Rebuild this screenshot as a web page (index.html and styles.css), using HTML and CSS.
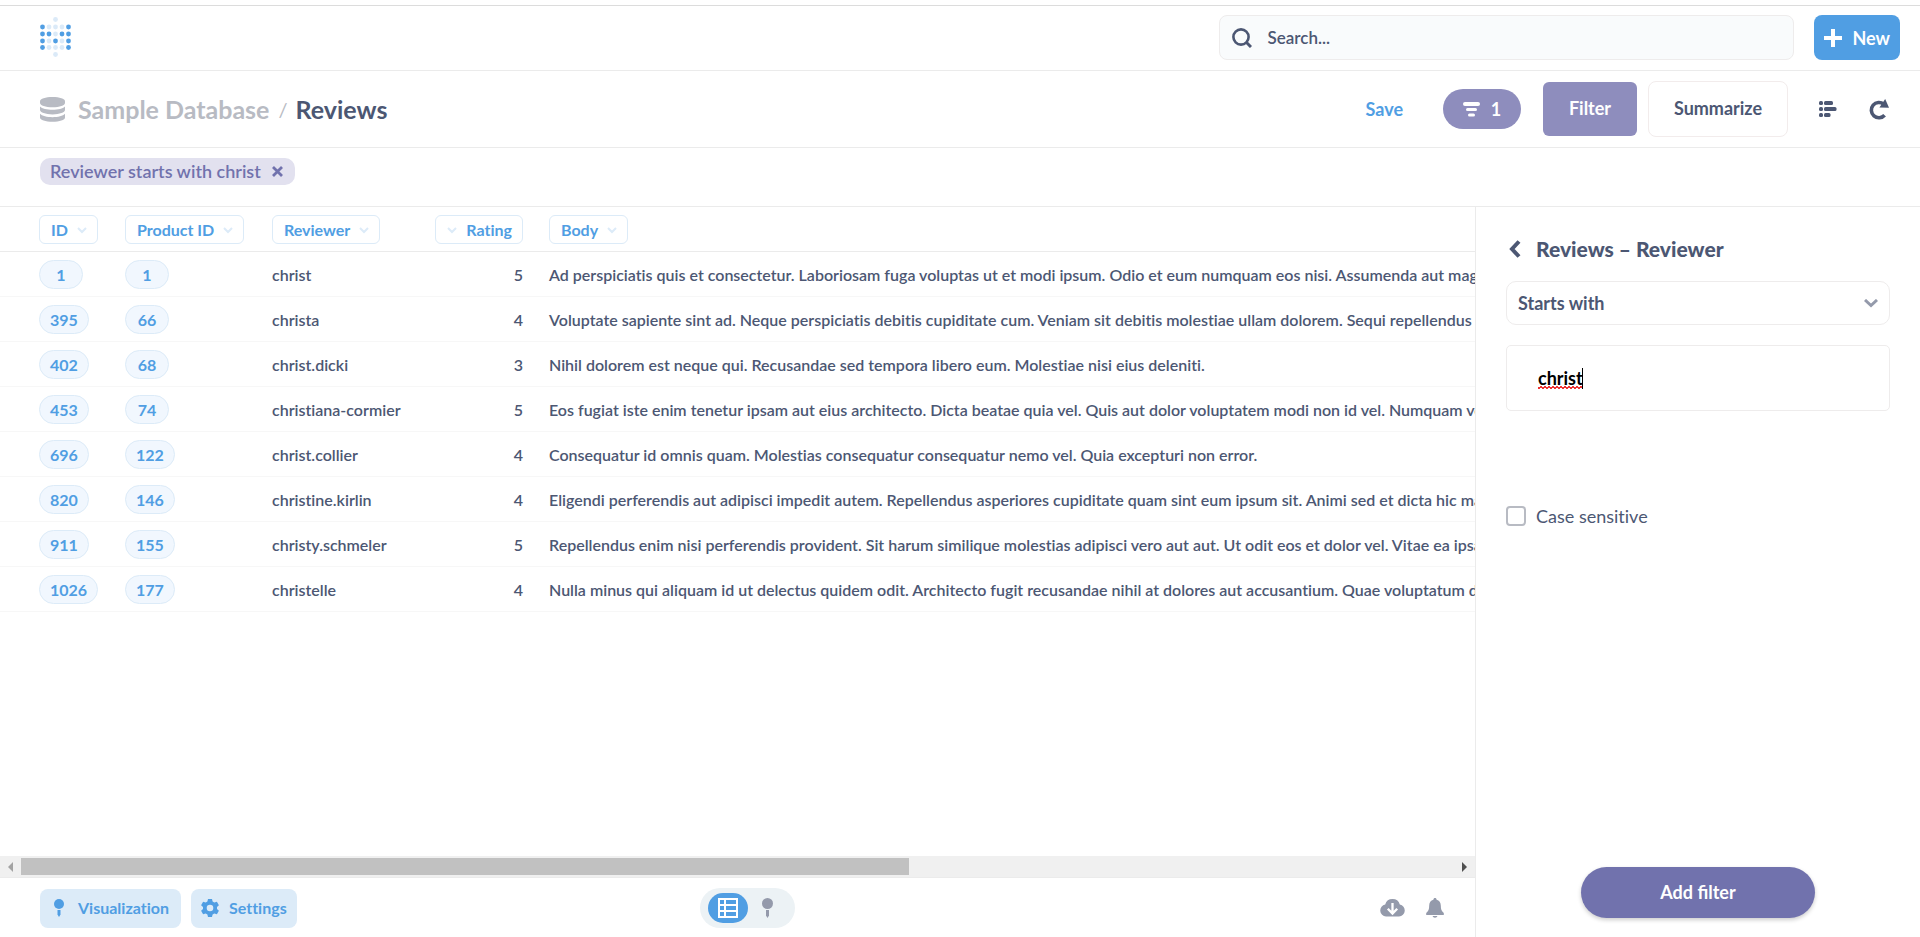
FILE: index.html
```html
<!DOCTYPE html>
<html lang="en">
<head>
<meta charset="utf-8">
<title>Reviews</title>
<link rel="stylesheet" href="styles.css">
</head>
<body>
<div class="app">
  <header class="topbar">
    <a class="logo" href="#" aria-label="Home">
      <svg width="32" height="41" viewBox="0 0 32 41" fill="#509ee3">
        <g fill="#dbeaf8">
          <circle cx="15.500" cy="2.500" r="2.400"/><circle cx="9" cy="10" r="2.400"/><circle cx="15.500" cy="10" r="2.400"/><circle cx="22" cy="10" r="2.400"/>
          <circle cx="15.500" cy="17" r="2.400"/><circle cx="9" cy="24" r="2.400"/><circle cx="22" cy="24" r="2.400"/>
          <circle cx="9" cy="30.500" r="2.400"/><circle cx="15.500" cy="30.500" r="2.400"/><circle cx="22" cy="30.500" r="2.400"/><circle cx="15.500" cy="37.500" r="2.400"/>
        </g>
        <circle cx="2.500" cy="10" r="2.400"/><circle cx="28.500" cy="10" r="2.400"/>
        <circle cx="2.500" cy="17" r="2.400"/><circle cx="9" cy="17" r="2.400"/><circle cx="22" cy="17" r="2.400"/><circle cx="28.500" cy="17" r="2.400"/>
        <circle cx="2.500" cy="24" r="2.400"/><circle cx="15.500" cy="24" r="2.400"/><circle cx="28.500" cy="24" r="2.400"/>
        <circle cx="2.500" cy="30.500" r="2.400"/><circle cx="28.500" cy="30.500" r="2.400"/>
      </svg>
    </a>
    <div class="topbar-actions">
      <label class="search">
        <svg width="20" height="20" viewBox="0 0 20 20" fill="none" stroke="#4c5773" stroke-width="2.600"><circle cx="9" cy="9" r="7.600"/><path d="M14.300 14.300L19 19" stroke-width="3"/></svg>
        <input type="text" placeholder="Search..." aria-label="Search">
      </label>
      <button class="new-btn" type="button">
        <svg width="18" height="18" viewBox="0 0 18 18" fill="#fff"><path d="M7 0h4v7h7v4h-7v7H7v-7H0V7h7z"/></svg>
        New
      </button>
    </div>
  </header>

  <div class="question-bar">
    <div class="crumbs">
      <svg width="25" height="25" viewBox="0 0 25 25" fill="#b8bbc3"><path d="M12.500 0C19.500 0 25 1.800 25 4.200v1.700c0 2.400-5.500 4.300-12.500 4.300S0 8.300 0 5.900V4.200C0 1.800 5.500 0 12.500 0z"/><path d="M0 9.400c2 2.200 7 3.300 12.500 3.300S23 11.600 25 9.400v3.700c0 2.400-5.500 4.300-12.500 4.300S0 15.500 0 13.100z"/><path d="M0 16.800c2 2.300 7 3.400 12.500 3.400S23 19.100 25 16.800v3.700c0 2.500-5.500 4.300-12.500 4.300S0 23 0 20.500z"/></svg>
      <a class="crumb-db" href="#">Sample Database</a>
      <span class="crumb-sep">/</span>
      <h1 class="crumb-table">Reviews</h1>
    </div>
    <div class="question-actions">
      <a class="save" href="#">Save</a>
      <button class="filter-count" type="button">
        <svg width="17" height="15" viewBox="0 0 17 15" fill="#fff"><rect width="17" height="4" rx="2"/><rect x="3" y="6" width="11" height="3" rx="1.500"/><rect x="5" y="11.500" width="7" height="3" rx="1.500"/></svg>
        1
      </button>
      <button class="filter-btn" type="button">Filter</button>
      <button class="summarize-btn" type="button">Summarize</button>
      <button class="icon-btn" type="button" aria-label="Show editor">
        <svg width="18" height="16" viewBox="0 0 18 16" fill="#4c5773"><rect width="4" height="4" rx="1.500"/><rect x="5" width="9" height="4" rx="1.500"/><rect y="6" width="4" height="4" rx="1.500"/><rect x="5" y="6" width="12.500" height="4" rx="1.500"/><rect y="12" width="4" height="4" rx="1.500"/><rect x="5" y="12" width="6.500" height="4" rx="1.500"/></svg>
      </button>
      <button class="icon-btn refresh-btn" type="button" aria-label="Refresh">
        <svg width="20" height="21" viewBox="0 0 20 21"><path d="M14.800 5.300A7.600 7.600 0 1 0 15.600 16.200" fill="none" stroke="#4c5773" stroke-width="3.600"/><path d="M16.200 0L20 8.700l-9.600-.3z" fill="#4c5773"/></svg>
      </button>
    </div>
  </div>

  <div class="filter-strip">
    <div class="filter-chip">
      Reviewer starts with christ
      <button type="button" aria-label="Remove filter"><svg width="11" height="11" viewBox="0 0 11 11" stroke="#7172ad" stroke-width="2.800"><path d="M1 1l9 9M10 1l-9 9"/></svg></button>
    </div>
  </div>

  <div class="workspace">
    <main class="results">
      <div class="table-wrap">
        <table class="grid">
          <colgroup><col class="col-id"><col class="col-product"><col class="col-reviewer"><col class="col-rating"><col class="col-body"></colgroup>
          <thead>
            <tr>
              <th><button class="col-head" type="button">ID <svg class="caret" viewBox="0 0 10 7"><path d="M1 1l4 4 4-4"/></svg></button></th>
              <th><button class="col-head" type="button">Product ID <svg class="caret" viewBox="0 0 10 7"><path d="M1 1l4 4 4-4"/></svg></button></th>
              <th><button class="col-head" type="button">Reviewer <svg class="caret" viewBox="0 0 10 7"><path d="M1 1l4 4 4-4"/></svg></button></th>
              <th class="num"><button class="col-head" type="button"><svg class="caret" viewBox="0 0 10 7"><path d="M1 1l4 4 4-4"/></svg> Rating</button></th>
              <th><button class="col-head" type="button">Body <svg class="caret" viewBox="0 0 10 7"><path d="M1 1l4 4 4-4"/></svg></button></th>
            </tr>
          </thead>
          <tbody>
            <tr><td><a class="pill" href="#">1</a></td><td><a class="pill" href="#">1</a></td><td class="txt">christ</td><td class="txt num">5</td><td class="txt">Ad perspiciatis quis et consectetur. Laboriosam fuga voluptas ut et modi ipsum. Odio et eum numquam eos nisi. Assumenda aut magnam</td></tr>
            <tr><td><a class="pill" href="#">395</a></td><td><a class="pill" href="#">66</a></td><td class="txt">christa</td><td class="txt num">4</td><td class="txt">Voluptate sapiente sint ad. Neque perspiciatis debitis cupiditate cum. Veniam sit debitis molestiae ullam dolorem. Sequi repellendus quia</td></tr>
            <tr><td><a class="pill" href="#">402</a></td><td><a class="pill" href="#">68</a></td><td class="txt">christ.dicki</td><td class="txt num">3</td><td class="txt">Nihil dolorem est neque qui. Recusandae sed tempora libero eum. Molestiae nisi eius deleniti.</td></tr>
            <tr><td><a class="pill" href="#">453</a></td><td><a class="pill" href="#">74</a></td><td class="txt">christiana-cormier</td><td class="txt num">5</td><td class="txt">Eos fugiat iste enim tenetur ipsam aut eius architecto. Dicta beatae quia vel. Quis aut dolor voluptatem modi non id vel. Numquam voluptas</td></tr>
            <tr><td><a class="pill" href="#">696</a></td><td><a class="pill" href="#">122</a></td><td class="txt">christ.collier</td><td class="txt num">4</td><td class="txt">Consequatur id omnis quam. Molestias consequatur consequatur nemo vel. Quia excepturi non error.</td></tr>
            <tr><td><a class="pill" href="#">820</a></td><td><a class="pill" href="#">146</a></td><td class="txt">christine.kirlin</td><td class="txt num">4</td><td class="txt">Eligendi perferendis aut adipisci impedit autem. Repellendus asperiores cupiditate quam sint eum ipsum sit. Animi sed et dicta hic maiores</td></tr>
            <tr><td><a class="pill" href="#">911</a></td><td><a class="pill" href="#">155</a></td><td class="txt">christy.schmeler</td><td class="txt num">5</td><td class="txt">Repellendus enim nisi perferendis provident. Sit harum similique molestias adipisci vero aut aut. Ut odit eos et dolor vel. Vitae ea ipsam</td></tr>
            <tr><td><a class="pill" href="#">1026</a></td><td><a class="pill" href="#">177</a></td><td class="txt">christelle</td><td class="txt num">4</td><td class="txt">Nulla minus qui aliquam id ut delectus quidem odit. Architecto fugit recusandae nihil at dolores aut accusantium. Quae voluptatum delectus</td></tr>
          </tbody>
        </table>
      </div>
      <div class="hscroll">
        <svg width="5" height="10" viewBox="0 0 5 10" fill="#a3a3a3"><path d="M5 0v10L0 5z"/></svg>
        <div class="hscroll-track"><div class="hscroll-thumb"></div></div>
        <svg width="5" height="10" viewBox="0 0 5 10" fill="#505050"><path d="M0 0v10l5-5z"/></svg>
      </div>
      <footer class="footer">
        <div class="footer-left">
          <button class="soft-btn viz-btn" type="button">
            <svg width="10" height="18" viewBox="0 0 10 18" fill="#509ee3"><circle cx="5" cy="5" r="5"/><path d="M3.500 11h3v4.500L5 18l-1.500-2.500z"/></svg>
            Visualization
          </button>
          <button class="soft-btn" type="button">
            <svg width="18" height="18" viewBox="0 0 18 18" fill="#509ee3" fill-rule="evenodd"><path d="M7 0h4l.6 2.600 1.700 1 2.600-.8 2 3.500-1.900 1.800v1.900l1.900 1.800-2 3.500-2.600-.8-1.700 1L11 18H7l-.6-2.500-1.700-1-2.600.8-2-3.500L2 10V8.100L.1 6.300l2-3.500 2.600.8 1.700-1zM9 5.700a3.300 3.300 0 1 0 0 6.600 3.300 3.300 0 0 0 0-6.600z"/></svg>
            Settings
          </button>
        </div>
        <div class="view-toggle">
          <button class="toggle-on" type="button" aria-label="Table view">
            <svg width="20" height="20" viewBox="0 0 20 20" fill="#fff" fill-rule="evenodd"><path d="M0 0h20v20H0zM2 2v4h4V2zM8 2v4h10V2zM2 8v4h4V8zM8 8v4h10V8zM2 14v4h4v-4zM8 14v4h10v-4z"/></svg>
          </button>
          <button class="toggle-off" type="button" aria-label="Visualization view">
            <svg width="11" height="20" viewBox="0 0 11 20" fill="#949aab"><circle cx="5.500" cy="5.500" r="5.500"/><path d="M4 12h3v5.500L5.500 20 4 17.500z"/></svg>
          </button>
        </div>
        <div class="footer-right">
          <button class="icon-btn" type="button" aria-label="Download">
            <svg width="25" height="18" viewBox="0 0 25 18"><path d="M6 17.500a6 6 0 0 1-.8-11.900A7.600 7.600 0 0 1 19.800 5.600 6 6 0 0 1 19 17.500z" fill="#949aab"/><path d="M12.500 4v10.500M7.800 9.700l4.700 4.900 4.700-4.900" fill="none" stroke="#fff" stroke-width="2.300"/></svg>
          </button>
          <button class="icon-btn" type="button" aria-label="Alerts">
            <svg width="18" height="20" viewBox="0 0 18 20" fill="#949aab"><path d="M9 0c.9 0 1.600.7 1.600 1.700 2.700.7 4.200 2.900 4.200 5.900 0 4 .7 5.700 3 7.400V17H.2v-2c2.300-1.700 3-3.400 3-7.400 0-3 1.500-5.200 4.200-5.900C7.400.7 8.100 0 9 0zM6.600 18h4.800c-.3 1-1.200 1.700-2.400 1.700S6.900 19 6.600 18z"/></svg>
          </button>
        </div>
      </footer>
    </main>

    <aside class="panel">
      <div class="panel-head">
        <button type="button" aria-label="Back"><svg width="12" height="18" viewBox="0 0 12 18" fill="none" stroke="#4c5773" stroke-width="4"><path d="M10 1.500L3 9l7 7.500"/></svg></button>
        <h2>Reviews – Reviewer</h2>
      </div>
      <div class="select-wrap">
        <select aria-label="Operator"><option>Starts with</option></select>
        <svg class="select-caret" width="14" height="9" viewBox="0 0 14 9" fill="none" stroke="#949aab" stroke-width="3"><path d="M1 1l6 5.500L13 1"/></svg>
      </div>
      <div class="value-wrap">
        <input class="value-input" type="text" value="christ" aria-label="Filter value" spellcheck="false">
        <span class="spell-mark"></span>
      </div>
      <label class="case-row"><input type="checkbox"> Case sensitive</label>
      <button class="add-btn" type="button">Add filter</button>
    </aside>
  </div>
</div>
</body>
</html>
```

FILE: styles.css
```css
* { box-sizing: border-box; }
body { margin: 0; background: #fff; color: #4c5773; font: 700 16px/20px Lato, "Liberation Sans", sans-serif; }
button, input, select { font: inherit; color: inherit; }
button { margin: 0; padding: 0; border: 0; background: none; cursor: pointer; }
a { color: inherit; text-decoration: none; }
svg { display: block; flex: none; }
h1, h2 { margin: 0; font-weight: 700; }

.app { display: flex; flex-direction: column; min-height: 100vh; padding-top: 5px; }

.topbar { display: flex; align-items: center; justify-content: space-between; height: 66px; padding: 0 20px 1px 40px; border-top: 1px solid #dcdcdc; border-bottom: 1px solid #ebebeb; }
.topbar-actions { display: flex; gap: 20px; width: 40%; min-width: 480px; justify-content: flex-end; }
.search { display: flex; flex: 1; align-items: center; gap: 15px; height: 45px; max-width: 575px; padding: 0 12px; border: 1px solid #eeecec; border-radius: 8px; background: #f9fbfc; }
.search input { flex: 1; min-width: 0; padding: 0; border: 0; outline: 0; background: none; font-size: 17px; font-weight: 600; }
.search input::placeholder { color: #4c5773; opacity: 1; }
.new-btn { display: flex; align-items: center; gap: 10px; height: 45px; padding: 0 10px; border-radius: 8px; background: #509ee3; color: #fff; font-size: 18px; }

.question-bar { display: flex; align-items: center; justify-content: space-between; padding: 10px 31px 10px 40px; border-bottom: 1px solid #ebebeb; }
.crumbs { display: flex; align-items: center; font-size: 25px; line-height: 30px; }
.crumb-db { margin-left: 13px; color: #b8bbc3; }
.crumb-sep { margin: 0 8px 0 9px; color: #b8bbc3; font-size: 20px; font-weight: 400; }
.crumb-table { font-size: 25px; line-height: 30px; }
.question-actions { display: flex; align-items: center; font-size: 18px; }
.save { margin-right: 40px; color: #509ee3; }
.filter-count { display: flex; align-items: center; justify-content: center; gap: 11px; width: 78px; height: 40px; margin-right: 22px; border-radius: 20px; background: #8e8dbd; color: #fff; }
.filter-btn { width: 94px; height: 54px; padding-bottom: 2px; margin-right: 11px; border-radius: 6px; background: #8e8dbd; color: #fff; }
.summarize-btn { width: 140px; height: 56px; padding-bottom: 2px; margin-right: 31px; border: 1px solid #f2ecec; border-radius: 8px; }
.refresh-btn { margin-left: 32px; }

.filter-strip { padding: 10px 40px 21px; border-bottom: 1px solid #ebebeb; }
.filter-chip { display: inline-flex; align-items: center; gap: 11px; height: 27px; padding: 0 12px 1px 10px; border-radius: 10px; background: #e2e1ef; color: #7172ad; font-size: 18px; font-weight: 600; vertical-align: top; font-variant-ligatures: none; }

.workspace { display: flex; flex: 1; }
.results { display: flex; flex: 1; flex-direction: column; min-width: 0; }
.table-wrap { flex: 1; overflow: hidden; }
.grid { width: 2380px; table-layout: fixed; border-collapse: separate; border-spacing: 0; white-space: nowrap; font-variant-ligatures: none; }
.col-id { width: 112px; }
.col-product { width: 147px; }
.col-reviewer { width: 161px; }
.col-rating { width: 116px; }
.grid th, .grid td { height: 45px; padding: 0 13px; text-align: left; border-bottom: 1px solid #f7f7f7; }
.grid th { border-bottom-color: #ebebeb; font-weight: 700; }
.grid th:first-child, .grid td:first-child { padding-left: 39px; padding-right: 0; }
.grid .txt { padding-top: 2px; font-weight: 600; }
.grid .num { text-align: right; }
.col-head { display: inline-flex; align-items: center; gap: 9px; height: 29px; padding: 2px 10px 0 11px; border: 1px solid #dcebf8; border-radius: 6px; color: #509ee3; vertical-align: middle; }
.caret { width: 10px; height: 7px; fill: none; stroke: #dcebf8; stroke-width: 2; }
.pill { display: inline-flex; align-items: center; justify-content: center; min-width: 44px; height: 29px; padding: 2px 10px 0; border: 1px solid #dcebf8; border-radius: 15px; background: #f1f7fe; color: #509ee3; vertical-align: middle; }

.hscroll { display: flex; align-items: center; gap: 8px; height: 22px; padding: 0 8px; border-bottom: 1px solid #ebebeb; background: #f0f0f0; }
.hscroll-track { flex: 1; }
.hscroll-thumb { width: 62%; height: 17px; background: #c1c1c1; }

.footer { display: grid; grid-template-columns: 1fr auto 1fr; align-items: center; height: 59px; padding: 1px 20px 0 40px; }
.footer-left { display: flex; gap: 10px; }
.soft-btn { display: flex; align-items: center; gap: 10px; height: 39px; padding: 0 10px; border-radius: 8px; background: #dcebf8; color: #509ee3; font-variant-ligatures: none; }
.viz-btn { gap: 14px; padding: 0 12px 0 14px; }
.view-toggle { display: flex; align-items: center; width: 95px; height: 40px; padding: 0 8px; border-radius: 20px; background: #ecf2f5; }
.toggle-on { display: flex; align-items: center; justify-content: center; width: 40px; height: 30px; border-radius: 15px; background: #509ee3; }
.toggle-off { padding: 0 14px; }
.footer-right { display: flex; align-items: center; justify-content: flex-end; gap: 21px; padding-right: 11px; }

.panel { display: flex; flex-direction: column; width: 445px; padding: 30px 30px 19px; border-left: 1px solid #ebebeb; }
.panel-head { display: flex; align-items: center; gap: 15px; height: 24px; padding-left: 3px; margin-bottom: 20px; }
.panel-head h2 { font-size: 21px; font-weight: 900; line-height: 24px; }
.select-wrap { position: relative; height: 44px; margin-bottom: 20px; font-size: 18px; }
.select-wrap select { width: 100%; height: 44px; padding: 0 11px; border: 1px solid #eeecec; border-radius: 10px; background: #fff; appearance: none; }
.select-caret { position: absolute; right: 12px; top: 18px; pointer-events: none; }
.value-wrap { position: relative; margin-bottom: 95px; font-size: 18px; }
.value-input { display: block; width: 100%; height: 66px; padding: 0 31px; border: 1px solid #eeecec; border-radius: 5px; outline: 0; color: #000; }
.spell-mark { position: absolute; left: 32px; bottom: 22px; width: 45px; height: 21px; border-right: 1px solid #000; background: radial-gradient(circle at 1px 1px, #e33 1px, transparent 1px) 0 100% / 4px 2px repeat-x, radial-gradient(circle at 3px 1px, #e33 1px, transparent 1px) 0 18px / 4px 2px repeat-x; }
.case-row { display: flex; align-items: center; gap: 10px; font-size: 18px; font-weight: 400; font-variant-ligatures: none; }
.case-row input { width: 20px; height: 20px; margin: 0; border: 2px solid #b8bbc3; border-radius: 4px; background: #fff; appearance: none; }
.add-btn { align-self: center; width: 234px; height: 51px; padding-bottom: 2px; margin-top: auto; border-radius: 26px; background: #7172ad; box-shadow: 0 2px 4px rgba(0, 0, 0, .2); color: #fff; font-size: 18px; }
```
